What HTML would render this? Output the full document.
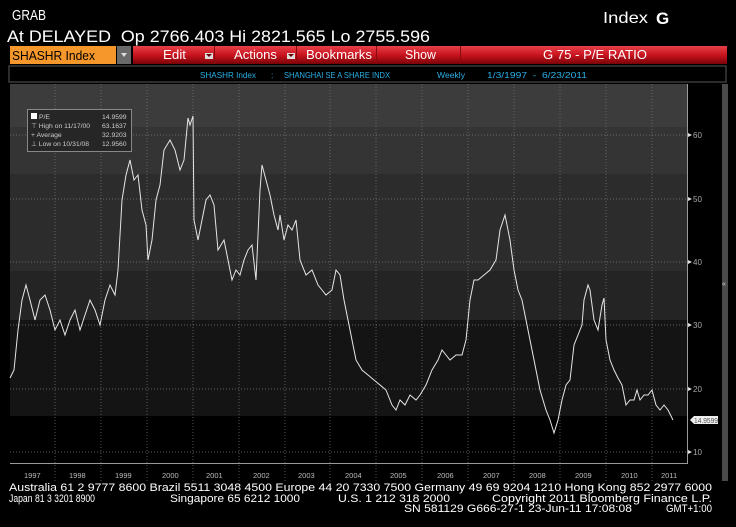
<!DOCTYPE html>
<html><head><meta charset="utf-8"><style>
html,body{margin:0;padding:0;background:#000;width:736px;height:527px;overflow:hidden}
svg{display:block}
text{font-family:"Liberation Sans",sans-serif}
</style></head><body>
<svg width="736" height="527" viewBox="0 0 736 527" xmlns="http://www.w3.org/2000/svg">
<defs>
<linearGradient id="red" x1="0" y1="0" x2="0" y2="1">
<stop offset="0" stop-color="#e8404a"/><stop offset="0.5" stop-color="#c8141e"/><stop offset="1" stop-color="#7a0208"/>
</linearGradient>
</defs>
<rect width="736" height="527" fill="#000"/>
<!-- header -->
<text x="12" y="20" font-size="15" fill="#fff" textLength="34" lengthAdjust="spacingAndGlyphs">GRAB</text>
<text x="603" y="23" font-size="16" fill="#fff" textLength="45" lengthAdjust="spacingAndGlyphs">Index</text>
<text x="656" y="24" font-size="17" font-weight="bold" fill="#fff" font-family="Liberation Serif">G</text>
<text x="7" y="42" font-size="17" fill="#fff" textLength="423" lengthAdjust="spacingAndGlyphs" xml:space="preserve">At DELAYED  Op 2766.403 Hi 2821.565 Lo 2755.596</text>
<!-- toolbar -->
<rect x="10" y="46" width="106" height="18" fill="#f5972a"/>
<text x="12" y="60" font-size="13" fill="#000" textLength="83" lengthAdjust="spacingAndGlyphs">SHASHR Index</text>
<rect x="117" y="46" width="14" height="18" fill="#6a6a6a"/>
<path d="M121 53 L127 53 L124 57 Z" fill="#ddd"/>
<rect x="133" y="46" width="594" height="18" fill="url(#red)"/>
<g stroke="#8a0a10" stroke-width="1">
<line x1="214.5" y1="46" x2="214.5" y2="64"/><line x1="296.5" y1="46" x2="296.5" y2="64"/>
<line x1="376.5" y1="46" x2="376.5" y2="64"/><line x1="460.5" y1="46" x2="460.5" y2="64"/>
</g>
<g fill="#fff" font-size="13">
<text x="163" y="59" textLength="23" lengthAdjust="spacingAndGlyphs">Edit</text>
<text x="234" y="59" textLength="43" lengthAdjust="spacingAndGlyphs">Actions</text>
<text x="306" y="59" textLength="66" lengthAdjust="spacingAndGlyphs">Bookmarks</text>
<text x="405" y="59" textLength="31" lengthAdjust="spacingAndGlyphs">Show</text>
<text x="543" y="59" textLength="104" lengthAdjust="spacingAndGlyphs">G 75 - P/E RATIO</text>
</g>
<rect x="205" y="53" width="8" height="6" fill="#ddd"/><path d="M206 54 L212 54 L209 57Z" fill="#600"/>
<rect x="287" y="53" width="8" height="6" fill="#ddd"/><path d="M288 54 L294 54 L291 57Z" fill="#600"/>
<!-- info bar -->
<rect x="9" y="66" width="717" height="16" fill="#000" stroke="#4a4a4a" stroke-width="1.2"/>
<g fill="#2ab0e6" font-size="8.5">
<text x="200" y="78" textLength="56" lengthAdjust="spacingAndGlyphs">SHASHR Index</text>
<text x="271" y="78">:</text>
<text x="284" y="78" textLength="106" lengthAdjust="spacingAndGlyphs">SHANGHAI SE A SHARE INDX</text>
<text x="437" y="78" textLength="28" lengthAdjust="spacingAndGlyphs">Weekly</text>
<text x="487" y="78" textLength="100" lengthAdjust="spacingAndGlyphs" xml:space="preserve">1/3/1997  -  6/23/2011</text>
</g>
<!-- chart bands -->
<rect x="10" y="84" width="677" height="43" fill="#3c3c3c"/>
<rect x="10" y="127" width="677" height="47" fill="#343434"/>
<rect x="10" y="174" width="677" height="97" fill="#2c2c2c"/>
<rect x="10" y="271" width="677" height="49" fill="#242424"/>
<rect x="10" y="320" width="677" height="96" fill="#141414"/>
<rect x="10" y="416" width="677" height="48" fill="#000"/>
<rect x="10" y="464" width="677" height="17" fill="#000"/>
<!-- grid -->
<g stroke="#7a7a7a" stroke-width="0.7" stroke-dasharray="1,2">
<line x1="55" y1="84" x2="55" y2="481"/><line x1="101" y1="84" x2="101" y2="481"/><line x1="147" y1="84" x2="147" y2="481"/>
<line x1="193" y1="84" x2="193" y2="481"/><line x1="239" y1="84" x2="239" y2="481"/><line x1="285" y1="84" x2="285" y2="481"/>
<line x1="330" y1="84" x2="330" y2="481"/><line x1="376" y1="84" x2="376" y2="481"/><line x1="422" y1="84" x2="422" y2="481"/>
<line x1="468" y1="84" x2="468" y2="481"/><line x1="514" y1="84" x2="514" y2="481"/><line x1="560" y1="84" x2="560" y2="481"/>
<line x1="606" y1="84" x2="606" y2="481"/><line x1="652" y1="84" x2="652" y2="481"/>
<line x1="10" y1="135" x2="687" y2="135"/><line x1="10" y1="199" x2="687" y2="199"/><line x1="10" y1="262" x2="687" y2="262"/>
<line x1="10" y1="325" x2="687" y2="325"/><line x1="10" y1="389" x2="687" y2="389"/><line x1="10" y1="452" x2="687" y2="452"/>
</g>
<line x1="687.5" y1="84" x2="687.5" y2="464" stroke="#999" stroke-width="1"/>
<line x1="10" y1="463.5" x2="688" y2="463.5" stroke="#999" stroke-width="1"/>
<!-- y axis labels -->
<g fill="#aaa" font-size="8">
<path d="M688 133 l4 2 l-4 2z M688 197 l4 2 l-4 2z M688 260 l4 2 l-4 2z M688 323 l4 2 l-4 2z M688 387 l4 2 l-4 2z M688 450 l4 2 l-4 2z" fill="#ddd"/>
<text x="693" y="138">60</text><text x="693" y="202">50</text><text x="693" y="265">40</text>
<text x="693" y="328">30</text><text x="693" y="392">20</text><text x="693" y="455">10</text>
</g>
<path d="M690 420 L694 416 L718 416 L718 424 L694 424 Z" fill="#eee"/>
<text x="694" y="423" font-size="7.5" fill="#555" textLength="24" lengthAdjust="spacingAndGlyphs">14.9599</text>
<!-- scrollbar -->
<rect x="722" y="84" width="6" height="397" fill="#4a4a4a"/>
<text x="722" y="286" font-size="7" fill="#ddd">«</text>
<!-- x labels -->
<g fill="#bbb" font-size="7.5">
<text x="24" y="478">1997</text><text x="69" y="478">1998</text><text x="115" y="478">1999</text><text x="162" y="478">2000</text>
<text x="206" y="478">2001</text><text x="253" y="478">2002</text><text x="298" y="478">2003</text><text x="345" y="478">2004</text>
<text x="390" y="478">2005</text><text x="437" y="478">2006</text><text x="483" y="478">2007</text><text x="529" y="478">2008</text>
<text x="575" y="478">2009</text><text x="621" y="478">2010</text><text x="661" y="478">2011</text>
</g>
<!-- data line -->
<polyline fill="none" stroke="#e6e6e6" stroke-width="1" points="10,378 14,370 18,330 22,300 26,285 30,300 35,320 40,300 45,295 50,310 55,330 60,320 65,335 70,320 75,310 80,330 85,315 90,300 95,310 100,325 105,300 110,285 115,295 118,270 122,200 126,175 130,160 134,180 138,175 142,210 146,225 148,260 152,240 156,200 160,185 164,150 170,140 175,150 180,170 184,160 188,118 190,125 193,116 194,220 198,240 202,220 206,200 210,195 214,205 218,250 224,240 228,260 232,280 236,270 240,275 244,260 248,250 252,245 256,280 260,190 262,165 266,180 270,195 274,215 278,230 280,215 284,240 288,225 292,230 296,220 300,260 306,275 312,270 318,285 322,290 326,295 332,290 336,270 340,275 344,300 350,330 356,360 362,370 368,375 374,380 380,385 386,390 392,405 396,410 400,400 405,405 410,395 416,400 420,395 426,385 432,370 438,360 442,350 446,355 450,360 456,355 462,355 466,340 470,300 474,280 478,280 484,275 490,270 496,260 500,230 505,215 510,240 514,270 518,290 522,300 528,330 534,360 540,390 546,410 550,420 554,433 558,420 562,400 566,385 570,380 574,345 578,335 582,325 584,300 588,285 590,290 594,320 598,330 602,305 604,298 606,340 610,360 614,370 618,378 622,385 626,405 630,400 634,400 637,390 640,400 644,395 648,395 652,390 656,405 660,410 664,405 668,410 673,420"/>
<!-- legend -->
<rect x="27.5" y="109.5" width="104" height="42" fill="#262626" stroke="#888" stroke-width="1"/>
<g fill="#ccc" font-size="6.8">
<rect x="31" y="113" width="6" height="6" fill="#fff"/>
<text x="39" y="119">P/E</text><text x="102" y="119">14.9599</text>
<text x="31" y="128">⊤ High on 11/17/00</text><text x="102" y="128">63.1637</text>
<text x="31" y="137">+ Average</text><text x="102" y="137">32.9203</text>
<text x="31" y="146">⊥ Low on 10/31/08</text><text x="102" y="146">12.9560</text>
</g>
<!-- footer -->
<g fill="#fff" font-size="11">
<text x="9" y="491" textLength="703" lengthAdjust="spacingAndGlyphs">Australia 61 2 9777 8600 Brazil 5511 3048 4500 Europe 44 20 7330 7500 Germany 49 69 9204 1210 Hong Kong 852 2977 6000</text>
<text x="9" y="502" textLength="86" lengthAdjust="spacingAndGlyphs">Japan 81 3 3201 8900</text>
<text x="170" y="502" textLength="130" lengthAdjust="spacingAndGlyphs">Singapore 65 6212 1000</text>
<text x="338" y="502" textLength="112" lengthAdjust="spacingAndGlyphs">U.S. 1 212 318 2000</text>
<text x="492" y="502" textLength="220" lengthAdjust="spacingAndGlyphs">Copyright 2011 Bloomberg Finance L.P.</text>
<text x="404" y="512" textLength="228" lengthAdjust="spacingAndGlyphs">SN 581129 G666-27-1 23-Jun-11 17:08:08</text>
<text x="666" y="512" textLength="46" lengthAdjust="spacingAndGlyphs">GMT+1:00</text>
</g>
</svg>
</body></html>
